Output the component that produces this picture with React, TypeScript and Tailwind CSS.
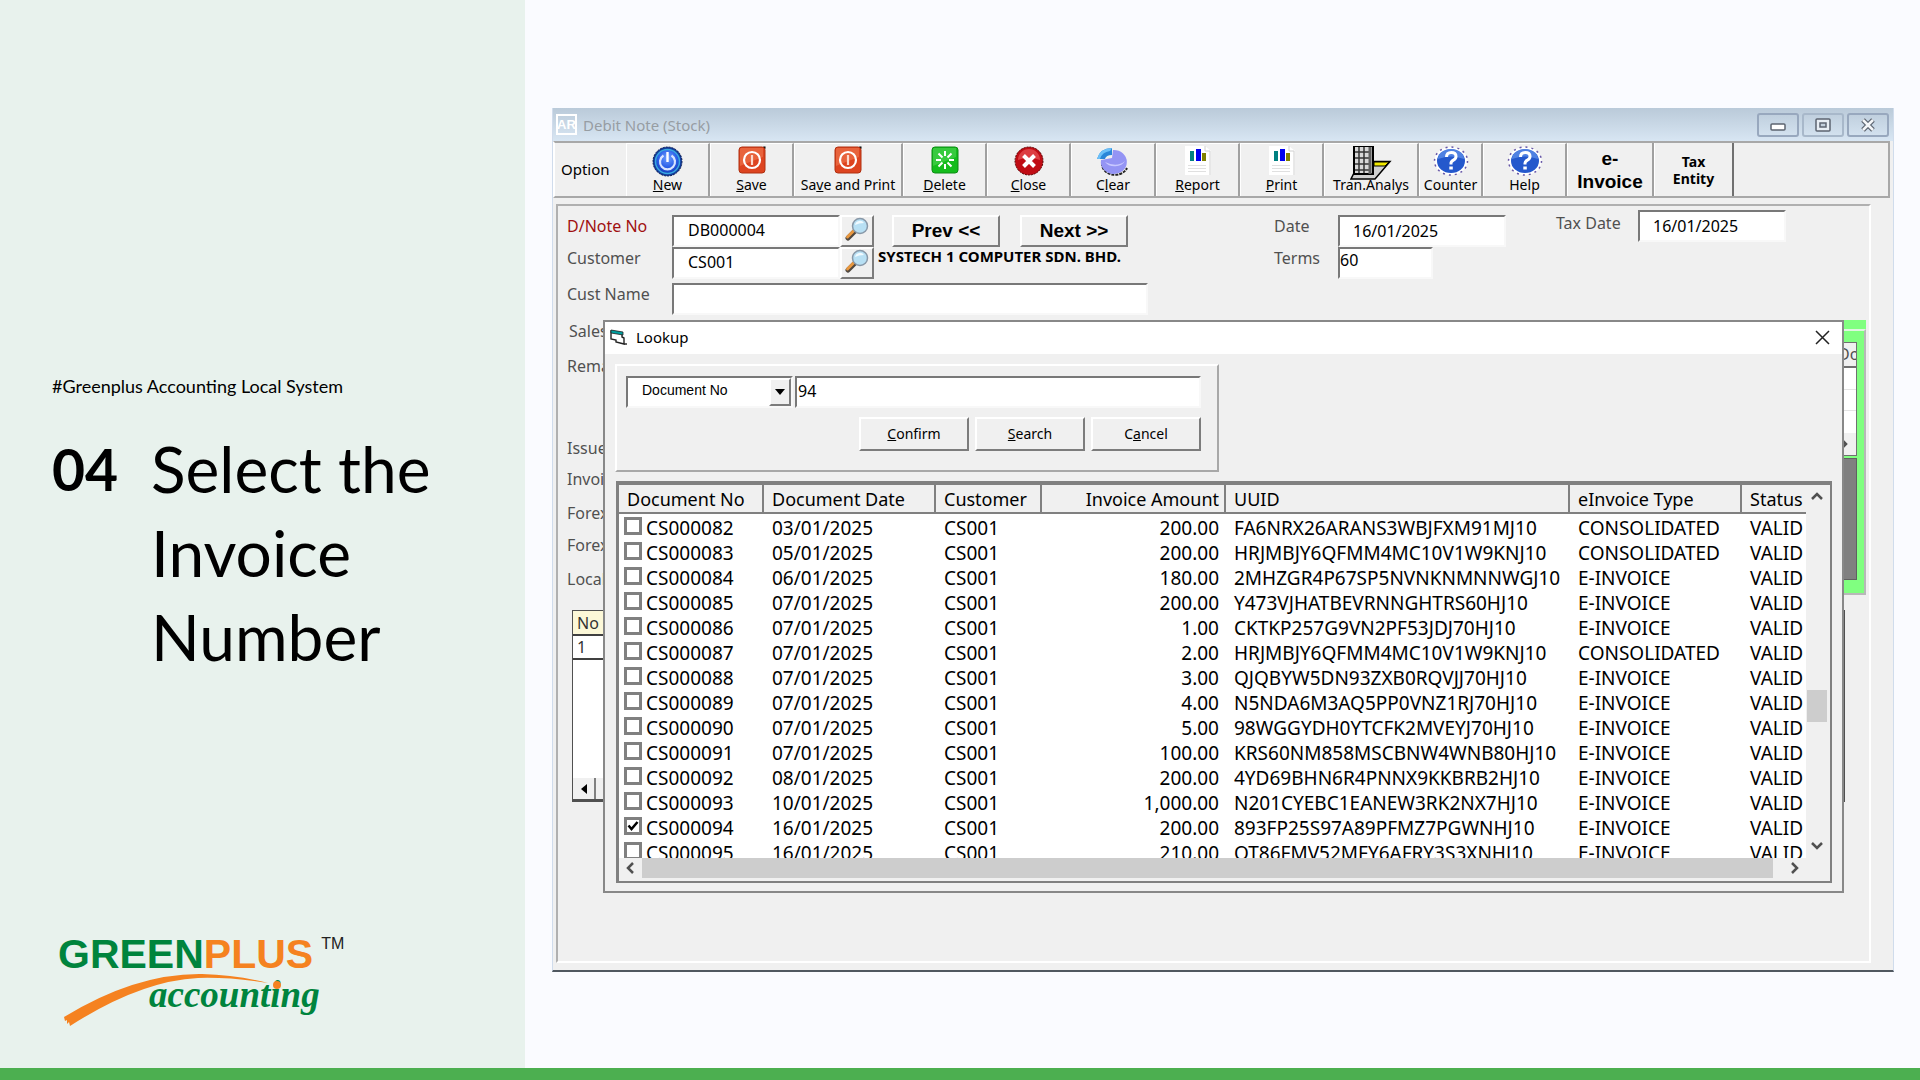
import React from 'react';

const sunken =
    'border-2 border-t-[#787878] border-l-[#787878] border-r-[#f8f8f8] border-b-[#f8f8f8] bg-white text-black outline-none';
const raised =
    'border-2 border-t-white border-l-white border-r-[#7c7c7c] border-b-[#7c7c7c] bg-[#f0f0f0] text-black';

const PowerIcon = () => (
    <svg width="31" height="31" viewBox="0 0 31 31">
        <defs>
            <radialGradient id="power" cx="0.5" cy="0.35" r="0.7">
                <stop offset="0" stopColor="#6fa0ff" />
                <stop offset="0.55" stopColor="#2a5fe8" />
                <stop offset="1" stopColor="#1238b0" />
            </radialGradient>
        </defs>
        <circle cx="15.5" cy="15.5" r="14.5" fill="#123c9c" stroke="#0a1c50" strokeDasharray="2 1" />
        <circle cx="15.5" cy="15.5" r="12" fill="url(#power)" stroke="#38a8e0" strokeWidth="1.5" />
        <path d="M11.5 9.5a7.5 7.5 0 1 0 8 0" fill="none" stroke="#d8e4ff" strokeWidth="2.2" />
        <path d="M15.5 6v10" stroke="#fff" strokeWidth="2.4" />
    </svg>
);

const SaveIcon = () => (
    <svg width="28" height="28" viewBox="0 0 28 28">
        <rect x="1" y="1" width="26" height="26" rx="3" fill="#dd4420" stroke="#b03010" />
        <path d="M3 2h22v9Q14 15 2 20V3z" fill="#f07850" opacity="0.6" />
        <path d="M25 .5h2.5V3z" fill="#000" />
        <circle cx="14" cy="14" r="8" fill="none" stroke="#fff" strokeWidth="2.2" />
        <path d="M14 9v10" stroke="#fbd8cc" strokeWidth="2.2" />
    </svg>
);

const DeleteIcon = () => (
    <svg width="28" height="28" viewBox="0 0 28 28">
        <rect x="1" y="1" width="26" height="26" rx="3" fill="#14bc1c" stroke="#0c8c14" />
        <path d="M3 2h22v9Q14 15 2 20V3z" fill="#5ad860" opacity="0.5" />
        <g stroke="#fff" strokeWidth="2">
            <path d="M14 5v5M14 18v5M5 14h5M18 14h5M7.5 7.5l4 4M16.5 16.5l4 4M20.5 7.5l-4 4M11.5 16.5l-4 4" />
        </g>
    </svg>
);

const CloseIcon = () => (
    <svg width="30" height="30" viewBox="0 0 30 30">
        <circle cx="15" cy="15" r="14" fill="#c00c14" stroke="#500" strokeDasharray="2 1" />
        <path d="M4 14a11 11 0 0 1 22 0Q15 10 4 14z" fill="#f06060" opacity="0.6" />
        <path d="M9.5 9.5l11 11M20.5 9.5l-11 11" stroke="#fff" strokeWidth="4" />
    </svg>
);

const ClearIcon = () => (
    <svg width="34" height="30" viewBox="0 0 34 30">
        <path d="M6 17a13 11 0 0 0 25 5" fill="none" stroke="#222" strokeWidth="2" strokeDasharray="3 1" />
        <path d="M5 14a13 12 0 1 0 12-10l-1 8z" fill="#9494f4" />
        <path d="M9 16a11 8 0 0 0 20-1q-8 7-20 1z" fill="#c8c8ff" />
        <path d="M1 13Q4 2 16 2v7q-6 0-7 4z" fill="#2a86d8" />
        <path d="M1 13Q4 2 16 2l-2 3Q6 6 4 13z" fill="#6cc0f8" />
    </svg>
);

const ReportIcon = () => (
    <svg width="26" height="29" viewBox="0 0 26 29">
        <path d="M0 0h20l6 5v24H0z" fill="#fff" />
        <path d="M20 0v5h5v24" fill="none" stroke="#d0d0d0" />
        <path d="M5 5h4v10H5z" fill="#008080" />
        <path d="M11 3h5v12h-5z" fill="#0000f0" />
        <path d="M17 7h4v8h-4z" fill="#808000" />
        <path d="M3 19.5h18M3 22.5h18M3 25.5h18" stroke="#e0e0e0" />
    </svg>
);

const AnalysisIcon = () => (
    <svg width="42" height="34" viewBox="0 0 42 34">
        <path d="M23 15.5h17L25 33H1l4-8h18z" fill="#d0d0d0" stroke="#000" strokeWidth="1.5" />
        <path d="M24 16h15l-4 4H24z" fill="#f0e800" stroke="#000" />
        <rect x="4" y="0" width="19" height="28" fill="#d8d8d8" stroke="#000" strokeWidth="2" />
        <path d="M5 6h14M5 12h14M5 18h14M5 24h14M9 1v26M14 1v26" stroke="#333" strokeWidth="1.5" />
        <path d="M20 1v27" stroke="#606060" strokeWidth="3" />
    </svg>
);

const HelpIcon = () => (
    <svg width="36" height="30" viewBox="0 0 36 30">
        <ellipse cx="18" cy="15" rx="16.5" ry="14" fill="#fff" stroke="#6858a8" strokeWidth="1.5" strokeDasharray="2 4" />
        <ellipse cx="18" cy="15" rx="14" ry="12" fill="#2458cc" />
        <path d="M5 13a13 10 0 0 1 26 0Q18 8 5 13z" fill="#6c9cf0" opacity="0.6" />
        <path d="M13.5 11q0-4.5 4.8-4.5T23 10.5q0 2.2-2.6 3.6T18 17.5v1" fill="none" stroke="#fff" strokeWidth="3" />
        <path d="M16.3 20.5h3.5v3h-3.5z" fill="#fff" />
    </svg>
);

const MagnifierIcon = () => (
    <svg width="24" height="24" viewBox="0 0 24 24">
        <path d="M3 21l7-7" stroke="#504840" strokeWidth="5" strokeLinecap="round" />
        <path d="M2.5 20l6-6" stroke="#e89840" strokeWidth="3" strokeLinecap="round" />
        <circle cx="15" cy="9" r="7.5" fill="#b8e0f4" stroke="#8898a8" strokeWidth="1.5" />
        <path d="M10 8a5 5 0 0 1 9-2q-5 0-9 2z" fill="#f0faff" />
    </svg>
);

const FormIcon = () => (
    <svg width="17" height="16" viewBox="0 0 17 16">
        <path d="M1 2l11 2v4l2 1v6l-8-2v-2l-5-1z" fill="#fff" stroke="#222" strokeWidth="1.4" />
        <path d="M1 1l12 2v3L1 4z" fill="#00a0a0" stroke="#222" strokeWidth="0.8" />
        <path d="M14 15h3" stroke="#222" strokeWidth="1.4" />
    </svg>
);

const Chevron = ({ d }: { d: string }) => (
    <svg width="12" height="12" viewBox="0 0 12 12">
        <path d={d} fill="none" stroke="#505050" strokeWidth="2.5" />
    </svg>
);

const tools = [
    { key: 'new', icon: <PowerIcon />, label: <><u>N</u>ew</>, width: 'w-[84px]' },
    { key: 'save', icon: <SaveIcon />, label: <><u>S</u>ave</>, width: 'w-[84px]' },
    { key: 'saveprint', icon: <SaveIcon />, label: <>Sa<u>v</u>e and Print</>, width: 'w-[109px]' },
    { key: 'delete', icon: <DeleteIcon />, label: <><u>D</u>elete</>, width: 'w-[84px]' },
    { key: 'close', icon: <CloseIcon />, label: <><u>C</u>lose</>, width: 'w-[84px]' },
    { key: 'clear', icon: <ClearIcon />, label: <>C<u>l</u>ear</>, width: 'w-[85px]' },
    { key: 'report', icon: <ReportIcon />, label: <><u>R</u>eport</>, width: 'w-[84px]' },
    { key: 'print', icon: <ReportIcon />, label: <><u>P</u>rint</>, width: 'w-[84px]' },
    { key: 'analysis', icon: <AnalysisIcon />, label: <>Tran.Analys</>, width: 'w-[95px]' },
    { key: 'counter', icon: <HelpIcon />, label: <>Counter</>, width: 'w-[64px]' },
    { key: 'help', icon: <HelpIcon />, label: <>Help</>, width: 'w-[84px]' },
];

const invoices = [
    { no: 'CS000082', date: '03/01/2025', amount: '200.00', uuid: 'FA6NRX26ARANS3WBJFXM91MJ10', type: 'CONSOLIDATED' },
    { no: 'CS000083', date: '05/01/2025', amount: '200.00', uuid: 'HRJMBJY6QFMM4MC10V1W9KNJ10', type: 'CONSOLIDATED' },
    { no: 'CS000084', date: '06/01/2025', amount: '180.00', uuid: '2MHZGR4P67SP5NVNKNMNNWGJ10', type: 'E-INVOICE' },
    { no: 'CS000085', date: '07/01/2025', amount: '200.00', uuid: 'Y473VJHATBEVRNNGHTRS60HJ10', type: 'E-INVOICE' },
    { no: 'CS000086', date: '07/01/2025', amount: '1.00', uuid: 'CKTKP257G9VN2PF53JDJ70HJ10', type: 'E-INVOICE' },
    { no: 'CS000087', date: '07/01/2025', amount: '2.00', uuid: 'HRJMBJY6QFMM4MC10V1W9KNJ10', type: 'CONSOLIDATED' },
    { no: 'CS000088', date: '07/01/2025', amount: '3.00', uuid: 'QJQBYW5DN93ZXB0RQVJJ70HJ10', type: 'E-INVOICE' },
    { no: 'CS000089', date: '07/01/2025', amount: '4.00', uuid: 'N5NDA6M3AQ5PP0VNZ1RJ70HJ10', type: 'E-INVOICE' },
    { no: 'CS000090', date: '07/01/2025', amount: '5.00', uuid: '98WGGYDH0YTCFK2MVEYJ70HJ10', type: 'E-INVOICE' },
    { no: 'CS000091', date: '07/01/2025', amount: '100.00', uuid: 'KRS60NM858MSCBNW4WNB80HJ10', type: 'E-INVOICE' },
    { no: 'CS000092', date: '08/01/2025', amount: '200.00', uuid: '4YD69BHN6R4PNNX9KKBRB2HJ10', type: 'E-INVOICE' },
    { no: 'CS000093', date: '10/01/2025', amount: '1,000.00', uuid: 'N201CYEBC1EANEW3RK2NX7HJ10', type: 'E-INVOICE' },
    { no: 'CS000094', date: '16/01/2025', amount: '200.00', uuid: '893FP25S97A89PFMZ7PGWNHJ10', type: 'E-INVOICE', checked: true },
    { no: 'CS000095', date: '16/01/2025', amount: '210.00', uuid: 'QT86FMV52MFY6AFRY3S3XNHJ10', type: 'E-INVOICE' },
];

const Logo = () => (
    <div className="relative ml-[6px] w-[300px] pb-16">
        <div className="flex items-start font-['Liberation_Sans',sans-serif]">
            <span className="text-[41px] leading-[46px] font-bold text-[#00843d]">
                GREEN<span className="text-[#f58220]">PLUS</span>
            </span>
            <span className="ml-2 pt-[3px] text-[16px] leading-[20px] text-[#222]">TM</span>
        </div>
        <span className="absolute left-[91px] top-[42px] text-[37px] leading-[44px] font-bold italic text-[#00843d] font-['Liberation_Serif',serif]">
            accounting
        </span>
        <svg className="absolute left-0 top-[40px]" width="270" height="64" viewBox="0 0 270 64">
            <path
                d="M6 46Q78 2 144 3Q180 4 210 12Q172 6 140 7Q82 10 12 55l-1-4-2 2 0-4-2 1z"
                fill="#f58220"
            />
            <circle cx="219" cy="14" r="4" fill="#f58220" />
        </svg>
    </div>
);

const Sidebar = () => (
    <aside className="flex w-[525px] shrink-0 flex-col bg-[#e8f2ed] pl-[52px] pt-[373px] font-['Lato',sans-serif] text-black">
        <p className="text-[18px] leading-[26px]">#Greenplus Accounting Local System</p>
        <div className="mt-[28px] flex items-start">
            <span className="w-[99px] text-[57px] leading-[84px] font-bold">04</span>
            <h1 className="text-[64px] leading-[84px]">
                Select the
                <br />
                Invoice
                <br />
                Number
            </h1>
        </div>
        <div className="mt-auto pb-[27px]">
            <Logo />
        </div>
    </aside>
);

const TitleBar = () => (
    <div className="flex h-[33px] items-center bg-linear-to-b from-[#bacad9] to-[#d8e6f3] pl-[3px] pr-[4px]">
        <span className="flex h-[21px] w-[21px] items-center justify-center border-2 border-white text-[13px] leading-none font-bold text-white font-['Liberation_Sans',sans-serif]">
            AR
        </span>
        <span className="ml-[6px] text-[15px] leading-[22px] text-[#979da3]">Debit Note (Stock)</span>
        <div className="ml-auto flex gap-[3px]">
            <button type="button" aria-label="Minimize" className="flex h-[24px] w-[42px] items-center justify-center rounded-[3px] border-2 border-[#98a8be]">
                <svg width="16" height="14" viewBox="0 0 16 14">
                    <rect x="1" y="6" width="14" height="6" rx="1" fill="#fff" stroke="#5c6470" strokeWidth="1.5" />
                </svg>
            </button>
            <button type="button" aria-label="Maximize" className="flex h-[24px] w-[42px] items-center justify-center rounded-[3px] border-2 border-[#a8b8ca]">
                <svg width="16" height="14" viewBox="0 0 16 14">
                    <rect x="1" y="1" width="14" height="12" rx="1" fill="#e8eef4" stroke="#5c6470" strokeWidth="1.5" />
                    <rect x="5" y="5" width="6" height="4" fill="#c4d0dc" stroke="#5c6470" strokeWidth="1.5" />
                </svg>
            </button>
            <button type="button" aria-label="Close window" className="flex h-[24px] w-[42px] items-center justify-center rounded-[3px] border-2 border-[#98a8be]">
                <svg width="16" height="14" viewBox="0 0 16 14">
                    <path d="M3 2l10 10M13 2L3 12" stroke="#5c6470" strokeWidth="5" />
                    <path d="M3 2l10 10M13 2L3 12" stroke="#f4f6f8" strokeWidth="2.5" />
                </svg>
            </button>
        </div>
    </div>
);

const Toolbar = () => (
    <div className="mr-[3px] flex h-[57px] border-2 border-[#a8a8a8] border-l-white bg-[#f0f0f0]">
        <span className="w-[71px] pl-[6px] pt-[15px] text-[15px] leading-[22px]">Option</span>
        {tools.map((tool) => (
            <button
                key={tool.key}
                type="button"
                className={`${tool.width} flex shrink-0 flex-col items-center whitespace-nowrap border-r-2 border-r-[#a0a0a0] border-l border-l-white border-t border-t-white pt-[2px] text-[14px] leading-[18px]`}
            >
                <span className="flex h-[30px] items-start justify-center">{tool.icon}</span>
                <span className="relative">{tool.label}</span>
            </button>
        ))}
        <button
            type="button"
            className="w-[87px] shrink-0 border-r-2 border-r-[#a0a0a0] border-l border-l-white text-[19px] leading-[23px] font-bold font-['Liberation_Sans',sans-serif]"
        >
            e-
            <br />
            Invoice
        </button>
        <button
            type="button"
            className="w-[80px] shrink-0 border-r-2 border-r-[#707070] border-l border-l-white text-[14px] leading-[17px] font-bold"
        >
            Tax
            <br />
            Entity
        </button>
    </div>
);

const FormHeader = () => (
    <div className="flex items-start pt-[9px] text-[16px] text-[#505050]">
        <div className="flex flex-col">
            <div className="flex h-[32px]">
                <label htmlFor="dnote" className="w-[105px] leading-[22px] text-[#a01010]">D/Note No</label>
                <input id="dnote" defaultValue="DB000004" className={`${sunken} h-[32px] w-[168px] pb-[2px] pl-[14px]`} />
                <button type="button" aria-label="Find note" className={`${raised} flex h-[32px] w-[34px] items-start justify-center`}>
                    <MagnifierIcon />
                </button>
                <button type="button" className={`${raised} ml-[18px] h-[32px] w-[108px] text-[19px] leading-[24px] font-bold font-['Liberation_Sans',sans-serif]`}>
                    {'Prev <<'}
                </button>
                <button type="button" className={`${raised} ml-[20px] h-[32px] w-[108px] text-[19px] leading-[24px] font-bold font-['Liberation_Sans',sans-serif]`}>
                    {'Next >>'}
                </button>
            </div>
            <div className="flex h-[32px]">
                <label htmlFor="customer" className="w-[105px] leading-[22px]">Customer</label>
                <input id="customer" defaultValue="CS001" className={`${sunken} h-[32px] w-[168px] pb-[2px] pl-[14px]`} />
                <button type="button" aria-label="Find customer" className={`${raised} flex h-[32px] w-[34px] items-start justify-center`}>
                    <MagnifierIcon />
                </button>
                <span className="ml-[4px] whitespace-nowrap text-[15px] leading-[18px] font-bold text-black">
                    SYSTECH 1 COMPUTER SDN. BHD.
                </span>
            </div>
            <div className="mt-[4px] flex h-[37px]">
                <label htmlFor="custname" className="w-[105px] leading-[22px]">Cust Name</label>
                <input id="custname" className={`${sunken} h-[32px] w-[476px]`} />
            </div>
        </div>
        <div className="ml-auto mr-[50px] flex flex-col">
            <div className="flex h-[32px]">
                <label htmlFor="date" className="w-[64px] leading-[22px]">Date</label>
                <input id="date" defaultValue="16/01/2025" className={`${sunken} h-[32px] w-[168px] pl-[13px]`} />
            </div>
            <div className="flex h-[32px]">
                <label htmlFor="terms" className="w-[64px] leading-[22px]">Terms</label>
                <input id="terms" defaultValue="60" className={`${sunken} h-[32px] w-[95px] pb-[6px]`} />
            </div>
        </div>
        <div className="-mt-[5px] mr-[83px] flex">
            <label htmlFor="taxdate" className="w-[82px] leading-[26px]">Tax Date</label>
            <input id="taxdate" defaultValue="16/01/2025" className={`${sunken} h-[32px] w-[148px] pl-[13px]`} />
        </div>
    </div>
);

const FormDetails = () => (
    <div className="flex h-[290px] items-start justify-between text-[16px] leading-[22px] text-[#505050]">
        <div className="flex flex-col">
            <span className="h-[35px] pl-[2px]">Sales</span>
            <span className="h-[82px]">Rema</span>
            <span className="h-[31px]">Issue</span>
            <span className="h-[34px]">Invoi</span>
            <span className="h-[32px]">Forex</span>
            <span className="h-[34px]">Forex</span>
            <span>Local</span>
        </div>
        <div className="mr-[3px] flex h-[275px] w-[698px] flex-col bg-[#80ff80]">
            <div className="mt-[9px] flex flex-1 flex-col items-end border-2 border-[#b8b8b8] border-t-[#e0f4e0] pr-[7px] pt-[11px]">
                <div className="flex h-[114px] w-full flex-col border border-[#707070] bg-white">
                    <div className="flex h-[25px] justify-end border-b-2 border-[#707070] bg-[#f0f0f0]">
                        <span className="w-[18px] overflow-hidden">Do</span>
                    </div>
                    <div className="h-[22px] border-b border-[#e4e4e4]" />
                    <div className="h-[21px] border-b border-[#e4e4e4]" />
                    <div className="h-[22px]" />
                    <div className="flex flex-1 items-center justify-end bg-[#f0f0f0] pr-[6px]">
                        <Chevron d="M3 1l5 5-5 5" />
                    </div>
                </div>
                <div className="mt-[2px] h-[122px] w-full border border-[#606060] bg-[#808080]" />
            </div>
        </div>
    </div>
);

const DetailGrid = () => (
    <div className="ml-[5px] mr-[24px] flex h-[192px] flex-col border border-[#505050] bg-white text-[16px] leading-[22px]">
        <table className="w-full text-left text-[#333]">
            <thead>
                <tr className="h-[24px] border-b-2 border-[#404040] bg-[#fcf8d8]">
                    <th className="pl-[4px] font-normal">No</th>
                </tr>
            </thead>
            <tbody>
                <tr className="h-[24px] border-b-2 border-[#404040]">
                    <td className="pl-[4px]">1</td>
                </tr>
            </tbody>
        </table>
        <div className="mt-auto flex h-[23px] border-b-2 border-[#505050] bg-[#f0f0f0]">
            <button type="button" aria-label="Scroll left" className="flex w-[23px] items-center justify-center border-r-2 border-[#808080]">
                <svg width="6" height="10" viewBox="0 0 6 10">
                    <path d="M6 0v10L0 5z" fill="#000" />
                </svg>
            </button>
        </div>
    </div>
);

const headCell =
    'border-r-2 border-r-[#808080] border-b-2 border-b-[#808080] bg-[#f0f0f0] pl-[8px] font-normal text-left text-[18px] leading-[24px]';

const InvoiceTable = () => (
    <div className="mr-[10px] mb-[8px] ml-[11px] mt-[9px] grid grid-cols-[minmax(0,1fr)_24px] grid-rows-[373px_23px] border-t-4 border-l-3 border-r-2 border-b-2 border-[#808080] bg-[#f0f0f0]">
        <div className="overflow-hidden bg-white">
            <table className="w-full table-fixed border-separate border-spacing-0 whitespace-nowrap text-[19px] leading-[25px] text-black">
                <thead>
                    <tr className="h-[29px]">
                        <th className={`${headCell} w-[145px]`}>Document No</th>
                        <th className={`${headCell} w-[172px]`}>Document Date</th>
                        <th className={`${headCell} w-[106px]`}>Customer</th>
                        <th className={`${headCell} w-[184px] pr-[5px] text-right`}>Invoice Amount</th>
                        <th className={headCell}>UUID</th>
                        <th className={`${headCell} w-[172px]`}>eInvoice Type</th>
                        <th className="w-[64px] border-b-2 border-b-[#808080] bg-[#f0f0f0] pl-[8px] text-left text-[18px] leading-[24px] font-normal">
                            Status
                        </th>
                    </tr>
                </thead>
                <tbody>
                    <tr className="h-[2px]" />
                    {invoices.map((inv) => (
                        <tr key={inv.no} className="h-[25px]">
                            <td className="pl-[5px]">
                                <label className="flex items-start gap-[4px]">
                                    <span className="relative flex pt-px">
                                        <input
                                            type="checkbox"
                                            defaultChecked={inv.checked}
                                            className="peer h-[18px] w-[18px] appearance-none border-3 border-[#808080] bg-white"
                                        />
                                        <svg className="absolute left-[3px] top-[4px] hidden peer-checked:block" width="12" height="12" viewBox="0 0 12 12">
                                            <path d="M1.5 5.500l3 3.500 6-7" fill="none" stroke="#000" strokeWidth="2.5" />
                                        </svg>
                                    </span>
                                    {inv.no}
                                </label>
                            </td>
                            <td className="pl-[8px]">{inv.date}</td>
                            <td className="pl-[8px]">CS001</td>
                            <td className="pr-[7px] text-right">{inv.amount}</td>
                            <td className="pl-[8px]">{inv.uuid}</td>
                            <td className="pl-[8px]">{inv.type}</td>
                            <td className="pl-[8px]">VALID</td>
                        </tr>
                    ))}
                </tbody>
            </table>
        </div>
        <div className="flex flex-col pl-px pt-[5px] pb-[6px]">
            <div className="flex w-[20px] justify-center">
                <Chevron d="M1 9l5-5 5 5" />
            </div>
            <div className="mt-[188px] h-[32px] w-[20px] bg-[#cdcdcd]" />
            <div className="mt-auto flex w-[20px] justify-center">
                <Chevron d="M1 3l5 5 5-5" />
            </div>
        </div>
        <div className="flex items-start pl-[5px] pr-[5px]">
            <div className="flex h-[20px] flex-1 items-center">
                <Chevron d="M9 1L4 6l5 5" />
                <div className="ml-[6px] mr-[16px] h-[20px] flex-1 bg-[#cdcdcd]" />
                <Chevron d="M3 1l5 5-5 5" />
            </div>
        </div>
    </div>
);

const LookupDialog = () => (
    <div role="dialog" aria-label="Lookup" className="absolute left-[50px] right-[49px] top-[212px] border-2 border-[#888] bg-[#f0f0f0] text-black">
        <div className="flex h-[32px] items-center bg-white pb-[2px] pl-[5px] pr-[12px]">
            <FormIcon />
            <span className="ml-[9px] text-[15px] leading-[20px]">Lookup</span>
            <button type="button" aria-label="Close" className="ml-auto">
                <svg width="15" height="15" viewBox="0 0 15 15">
                    <path d="M1 1l13 13M14 1L1 14" stroke="#222" strokeWidth="1.5" />
                </svg>
            </button>
        </div>
        <div className="ml-[10px] mt-[10px] w-[604px] border-2 border-t-white border-l-white border-r-[#a8a8a8] border-b-[#a8a8a8] pt-[10px] pb-[19px] pl-[9px] pr-[16px]">
            <div className="flex gap-[2px]">
                <div className={`${sunken} flex h-[32px] w-[167px]`}>
                    <select
                        aria-label="Search field"
                        className="min-w-0 flex-1 appearance-none bg-white pb-[4px] pl-[14px] text-[14px] outline-none font-['Liberation_Sans',sans-serif]"
                    >
                        <option>Document No</option>
                    </select>
                    <span className={`${raised} flex w-[22px] items-center justify-center`}>
                        <svg width="10" height="6" viewBox="0 0 10 6">
                            <path d="M0 0h10L5 6z" fill="#000" />
                        </svg>
                    </span>
                </div>
                <input aria-label="Search text" defaultValue="94" className={`${sunken} h-[32px] min-w-0 flex-1 pb-[3px] pl-px text-[16px]`} />
            </div>
            <div className="mt-[9px] flex justify-end gap-[6px] text-[14px] leading-[20px]">
                <button type="button" className={`${raised} h-[34px] w-[110px]`}><u>C</u>onfirm</button>
                <button type="button" className={`${raised} h-[34px] w-[110px]`}><u>S</u>earch</button>
                <button type="button" className={`${raised} h-[34px] w-[110px]`}>C<u>a</u>ncel</button>
            </div>
        </div>
        <InvoiceTable />
    </div>
);

const DebitNoteWindow = () => (
    <section className="relative border-b-2 border-l border-r border-b-[#505860] border-l-[#d0dcec] border-r-[#d0dcec] bg-[#f0f0f0] text-black font-['Noto_Sans',sans-serif]">
        <TitleBar />
        <Toolbar />
        <div className="mt-[6px] mr-[22px] mb-[7px] ml-[3px] border-2 border-t-[#b0b0b0] border-l-[#b0b0b0] border-r-white border-b-white pb-[159px] pl-[9px]">
            <FormHeader />
            <FormDetails />
            <DetailGrid />
        </div>
        <LookupDialog />
    </section>
);

const App = () => {
    return (
        <div className="flex min-h-screen flex-col bg-[#fafbff]">
            <div className="flex flex-1">
                <Sidebar />
                <main className="min-w-0 flex-1 pt-[108px] pr-[26px] pl-[27px]">
                    <DebitNoteWindow />
                </main>
            </div>
            <footer className="h-[12px] bg-[#4caf50]" />
        </div>
    );
};

export default App;
